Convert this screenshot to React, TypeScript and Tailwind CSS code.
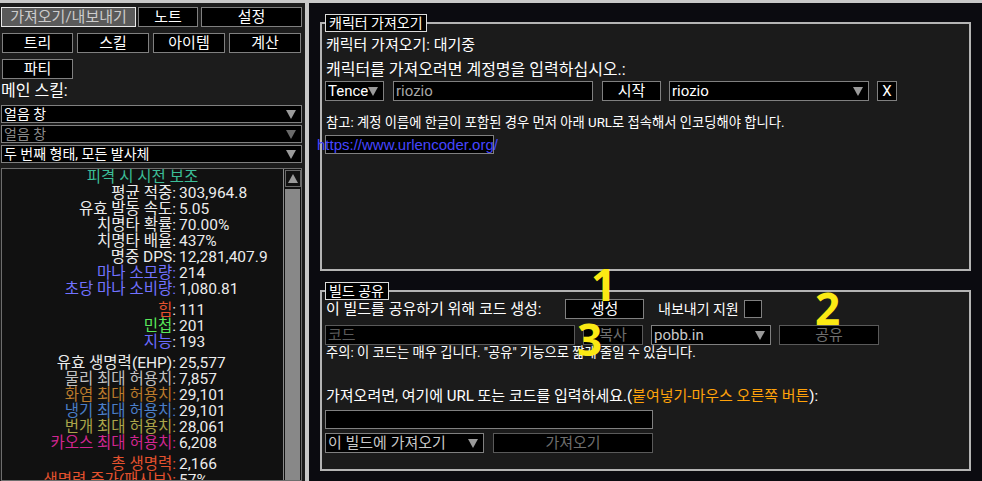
import type { ReactNode } from 'react';

type Stat = { label: string; value: string; color: string; plainColon?: boolean };

const statGroups: Stat[][] = [
  [
    { label: '평균 적중', value: '303,964.8', color: 'text-[#ececec]' },
    { label: '유효 발동 속도', value: '5.05', color: 'text-[#ececec]' },
    { label: '치명타 확률', value: '70.00%', color: 'text-[#ececec]' },
    { label: '치명타 배율', value: '437%', color: 'text-[#ececec]' },
    { label: '명중 DPS', value: '12,281,407.9', color: 'text-[#ececec]' },
    { label: '마나 소모량', value: '214', color: 'text-[#7272ff]' },
    { label: '초당 마나 소비량', value: '1,080.81', color: 'text-[#7272ff]' },
  ],
  [
    { label: '힘', value: '111', color: 'text-[#e4522e]', plainColon: true },
    { label: '민첩', value: '201', color: 'text-[#5ae85a]', plainColon: true },
    { label: '지능', value: '193', color: 'text-[#6b6bff]', plainColon: true },
  ],
  [
    { label: '유효 생명력(EHP)', value: '25,577', color: 'text-[#ececec]' },
    { label: '물리 최대 허용치', value: '7,857', color: 'text-[#c2c2c2]' },
    { label: '화염 최대 허용치', value: '29,101', color: 'text-[#b97a2c]' },
    { label: '냉기 최대 허용치', value: '29,101', color: 'text-[#4a7ec8]' },
    { label: '번개 최대 허용치', value: '28,061', color: 'text-[#aba54a]' },
    { label: '카오스 최대 허용치', value: '6,208', color: 'text-[#d02690]' },
  ],
  [
    { label: '총 생명력', value: '2,166', color: 'text-[#e4522e]' },
    { label: '생명력 증가(패시브)', value: '57%', color: 'text-[#e4522e]' },
  ],
];

function Arrow({ dim }: { dim?: boolean }) {
  return (
    <svg width="10" height="9" viewBox="0 0 10 9" className="shrink-0">
      <polygon points="0,0 10,0 5,9" fill={dim ? '#6a6a6a' : '#9a9a9a'} />
    </svg>
  );
}

function Btn({ children, w, dim, active }: { children: ReactNode; w: string; dim?: boolean; active?: boolean }) {
  const look = active
    ? 'bg-[#5a5a5a] border-[#e8e8e8] text-[#cccccc]'
    : dim
      ? 'bg-black border-[#5a5a5a] text-[#6e6e6e]'
      : 'bg-black border-[#808080] text-white';
  return (
    <div className={`${w} h-full shrink-0 border flex items-center justify-center leading-[16px] whitespace-nowrap overflow-hidden ${look}`}>
      {children}
    </div>
  );
}

function Drop({ children, w, text = 'text-white', arrowDim }: { children: ReactNode; w: string; text?: string; arrowDim?: boolean }) {
  return (
    <div className={`${w} h-full shrink-0 border border-[#808080] bg-black flex items-center pl-[2px] pr-[5px] overflow-hidden`}>
      <span className={`flex-1 min-w-0 overflow-hidden whitespace-nowrap leading-[16px] ${text}`}>{children}</span>
      <Arrow dim={arrowDim} />
    </div>
  );
}

function Section({ title, h, titleW, children }: { title: string; h: string; titleW: string; children: ReactNode }) {
  return (
    <div className={`relative ml-[11px] w-[651px] ${h} border-2 border-[#b4b4b4] bg-[#1b1b1b] pl-[3px]`}>
      <div className={`absolute left-[3px] -top-[10px] ${titleW} h-[18px] border border-[#dcdcdc] bg-black text-white text-[14px] leading-[16px] px-[3px] whitespace-nowrap`}>
        {title}
      </div>
      {children}
    </div>
  );
}

export default function App() {
  return (
    <div className="w-[982px] h-[481px] overflow-hidden flex flex-col bg-[#0b0b10] [font-family:Roboto,'Noto_Sans_CJK_KR',sans-serif]">
      <div className="h-[3px] shrink-0 bg-[#c8c8c8]" />
      <div className="flex flex-1 min-h-0">
        {/* left panel */}
        <div className="w-[305px] shrink-0 bg-[#1c1c1c] flex flex-col text-[15px]">
          <div className="flex h-[20px] mt-[4px]">
            <div className="ml-[1px]"><Btn w="w-[135px]" active>가져오기/내보내기</Btn></div>
            <div className="ml-[2px]"><Btn w="w-[60px]">노트</Btn></div>
            <div className="ml-[3px]"><Btn w="w-[101px]">설정</Btn></div>
          </div>
          <div className="flex h-[20px] mt-[6px] pl-[2px] gap-[4px]">
            <Btn w="w-[71px]">트리</Btn>
            <Btn w="w-[72px]">스킬</Btn>
            <Btn w="w-[72px]">아이템</Btn>
            <Btn w="w-[72px]">계산</Btn>
          </div>
          <div className="flex h-[20px] mt-[6px] pl-[2px]">
            <Btn w="w-[71px]">파티</Btn>
          </div>
          <div className="mt-[3px] h-[18px] text-[16px] leading-[18px] text-white pl-[1px]">메인 스킬:</div>
          <div className="flex flex-col gap-[2px] mt-[5px] pl-[1px] text-[14px]">
            <div className="h-[18px] flex"><Drop w="w-[301px]">얼음 창</Drop></div>
            <div className="h-[18px] flex"><Drop w="w-[301px]" text="text-[#8a8a8a]" arrowDim>얼음 창</Drop></div>
            <div className="h-[18px] flex"><Drop w="w-[301px]">두 번째 형태, 모든 발사체</Drop></div>
          </div>
          <div className="mt-[5px] ml-[1px] w-[301px] flex-1 min-h-0 border border-[#6e6e6e] bg-[#111111] flex overflow-hidden">
            <div className="flex-1 flex flex-col text-[15.5px] leading-[16px]">
              <div className="h-[16px] text-center text-[#3cbd97]">피격 시 시전 보조</div>
              {statGroups.map((g, gi) => (
                <div key={gi} className={gi > 0 ? 'mt-[5px]' : ''}>
                  {g.map((s) => (
                    <div key={s.label} className="flex h-[16px] whitespace-nowrap">
                      <div className="w-[174px] shrink-0 text-right">
                        {s.plainColon ? (
                          <>
                            <span className={s.color}>{s.label}</span>
                            <span className="text-[#ececec]">:</span>
                          </>
                        ) : (
                          <span className={s.color}>{s.label}:</span>
                        )}
                      </div>
                      <div className="pl-[3px] text-[#ececec]">{s.value}</div>
                    </div>
                  ))}
                </div>
              ))}
            </div>
            <div className="w-[18px] shrink-0 border-l border-[#8a8a8a] flex flex-col items-center pt-[1px]">
              <div className="w-[16px] h-[17px] border border-[#6a6a6a] bg-[#111] flex items-center justify-center">
                <svg width="10" height="9" viewBox="0 0 10 9">
                  <polygon points="5,0 10,9 0,9" fill="#9a9a9a" />
                </svg>
              </div>
              <div className="w-[15px] flex-1 mt-[2px] bg-[#888888]" />
            </div>
          </div>
        </div>

        <div className="w-[4px] shrink-0 bg-[#c8c8c8]" />

        {/* right panel */}
        <div className="relative flex-1 flex flex-col text-white">
          <div className="mt-[19px]">
            <Section title="캐릭터 가져오기" h="h-[249px]" titleW="w-[102px]">
              <div className="mt-[12px] h-[18px] text-[15px] leading-[18px] pl-[1px]">캐릭터 가져오기: 대기중</div>
              <div className="mt-[7px] h-[18px] text-[16px] leading-[18px] pl-[1px]">캐릭터를 가져오려면 계정명을 입력하십시오.:</div>
              <div className="mt-[2px] h-[20px] flex text-[15px]">
                <Drop w="w-[59px]">Tence</Drop>
                <div className="ml-[9px] w-[200px] h-full border border-[#808080] bg-black text-[#a8a8a8] leading-[16px] flex items-center pl-[2px]">riozio</div>
                <div className="ml-[9px]"><Btn w="w-[59px]">시작</Btn></div>
                <div className="ml-[8px] h-full flex"><Drop w="w-[200px]">riozio</Drop></div>
                <div className="ml-[8px]"><Btn w="w-[20px]">X</Btn></div>
              </div>
              <div className="mt-[14px] h-[16px] text-[13.3px] leading-[16px] pl-[1px] whitespace-nowrap">
                참고: 계정 이름에 한글이 포함된 경우 먼저 아래 URL로 접속해서 인코딩해야 합니다.
              </div>
              <div className="mt-[4px] w-[169px] h-[19px] border border-[#808080] bg-black">
                <div className="-ml-[9px] whitespace-nowrap text-[15px] leading-[17px] text-[#4646ff] [font-family:'Liberation_Sans',sans-serif]">
                  https://www.urlencoder.org/
                </div>
              </div>
            </Section>
          </div>
          <div className="mt-[19px]">
            <Section title="빌드 공유" h="h-[181px]" titleW="w-[64px]">
              <div className="mt-[7px] h-[20px] flex items-center text-[15px]">
                <div className="w-[240px] shrink-0 pl-[1px] leading-[20px] whitespace-nowrap">이 빌드를 공유하기 위해 코드 생성:</div>
                <div className="h-full"><Btn w="w-[79px]">생성</Btn></div>
                <div className="ml-[14px] text-[14px] leading-[16px] whitespace-nowrap">내보내기 지원</div>
                <div className="ml-[5px] w-[18px] h-[18px] border border-[#808080] bg-black" />
              </div>
              <div className="mt-[6px] h-[20px] flex text-[15px]">
                <div className="w-[250px] h-full border border-[#5a5a5a] bg-black text-[#5a5a5a] leading-[16px] flex items-center pl-[2px]">코드</div>
                <div className="ml-[8px]"><Btn w="w-[60px]" dim>복사</Btn></div>
                <div className="ml-[8px] h-full flex"><Drop w="w-[120px]" text="text-[#c8c8c8]">pobb.in</Drop></div>
                <div className="ml-[8px]"><Btn w="w-[100px]" dim>공유</Btn></div>
              </div>
              <div className="h-[16px] text-[13.3px] leading-[16px] pl-[1px] whitespace-nowrap">
                주의: 이 코드는 매우 깁니다. "공유" 기능으로 짧게 줄일 수 있습니다.
              </div>
              <div className="mt-[26px] h-[18px] text-[15px] leading-[18px] pl-[1px] whitespace-nowrap">
                가져오려면, 여기에 URL 또는 코드를 입력하세요.(<span className="text-[#ffa20a]">붙여넣기-마우스 오른쪽 버튼</span>):
              </div>
              <div className="mt-[5px] w-[328px] h-[19px] border border-[#808080] bg-black" />
              <div className="mt-[4px] h-[20px] flex text-[15px]">
                <Drop w="w-[159px]" text="text-[#c8c8c8]">이 빌드에 가져오기</Drop>
                <div className="ml-[9px]"><Btn w="w-[160px]" dim>가져오기</Btn></div>
              </div>
            </Section>
          </div>

          {/* yellow annotation numbers */}
          <div className="absolute left-[282px] top-[259px] text-[44px] font-bold leading-none text-[#fbe914] [font-family:'Noto_Sans',sans-serif]">1</div>
          <div className="absolute left-[506px] top-[283px] text-[44px] font-bold leading-none text-[#fbe914] [font-family:'Noto_Sans',sans-serif]">2</div>
          <div className="absolute left-[268px] top-[314px] text-[44px] font-bold leading-none text-[#fbe914] [font-family:'Noto_Sans',sans-serif]">3</div>
        </div>
      </div>
    </div>
  );
}
